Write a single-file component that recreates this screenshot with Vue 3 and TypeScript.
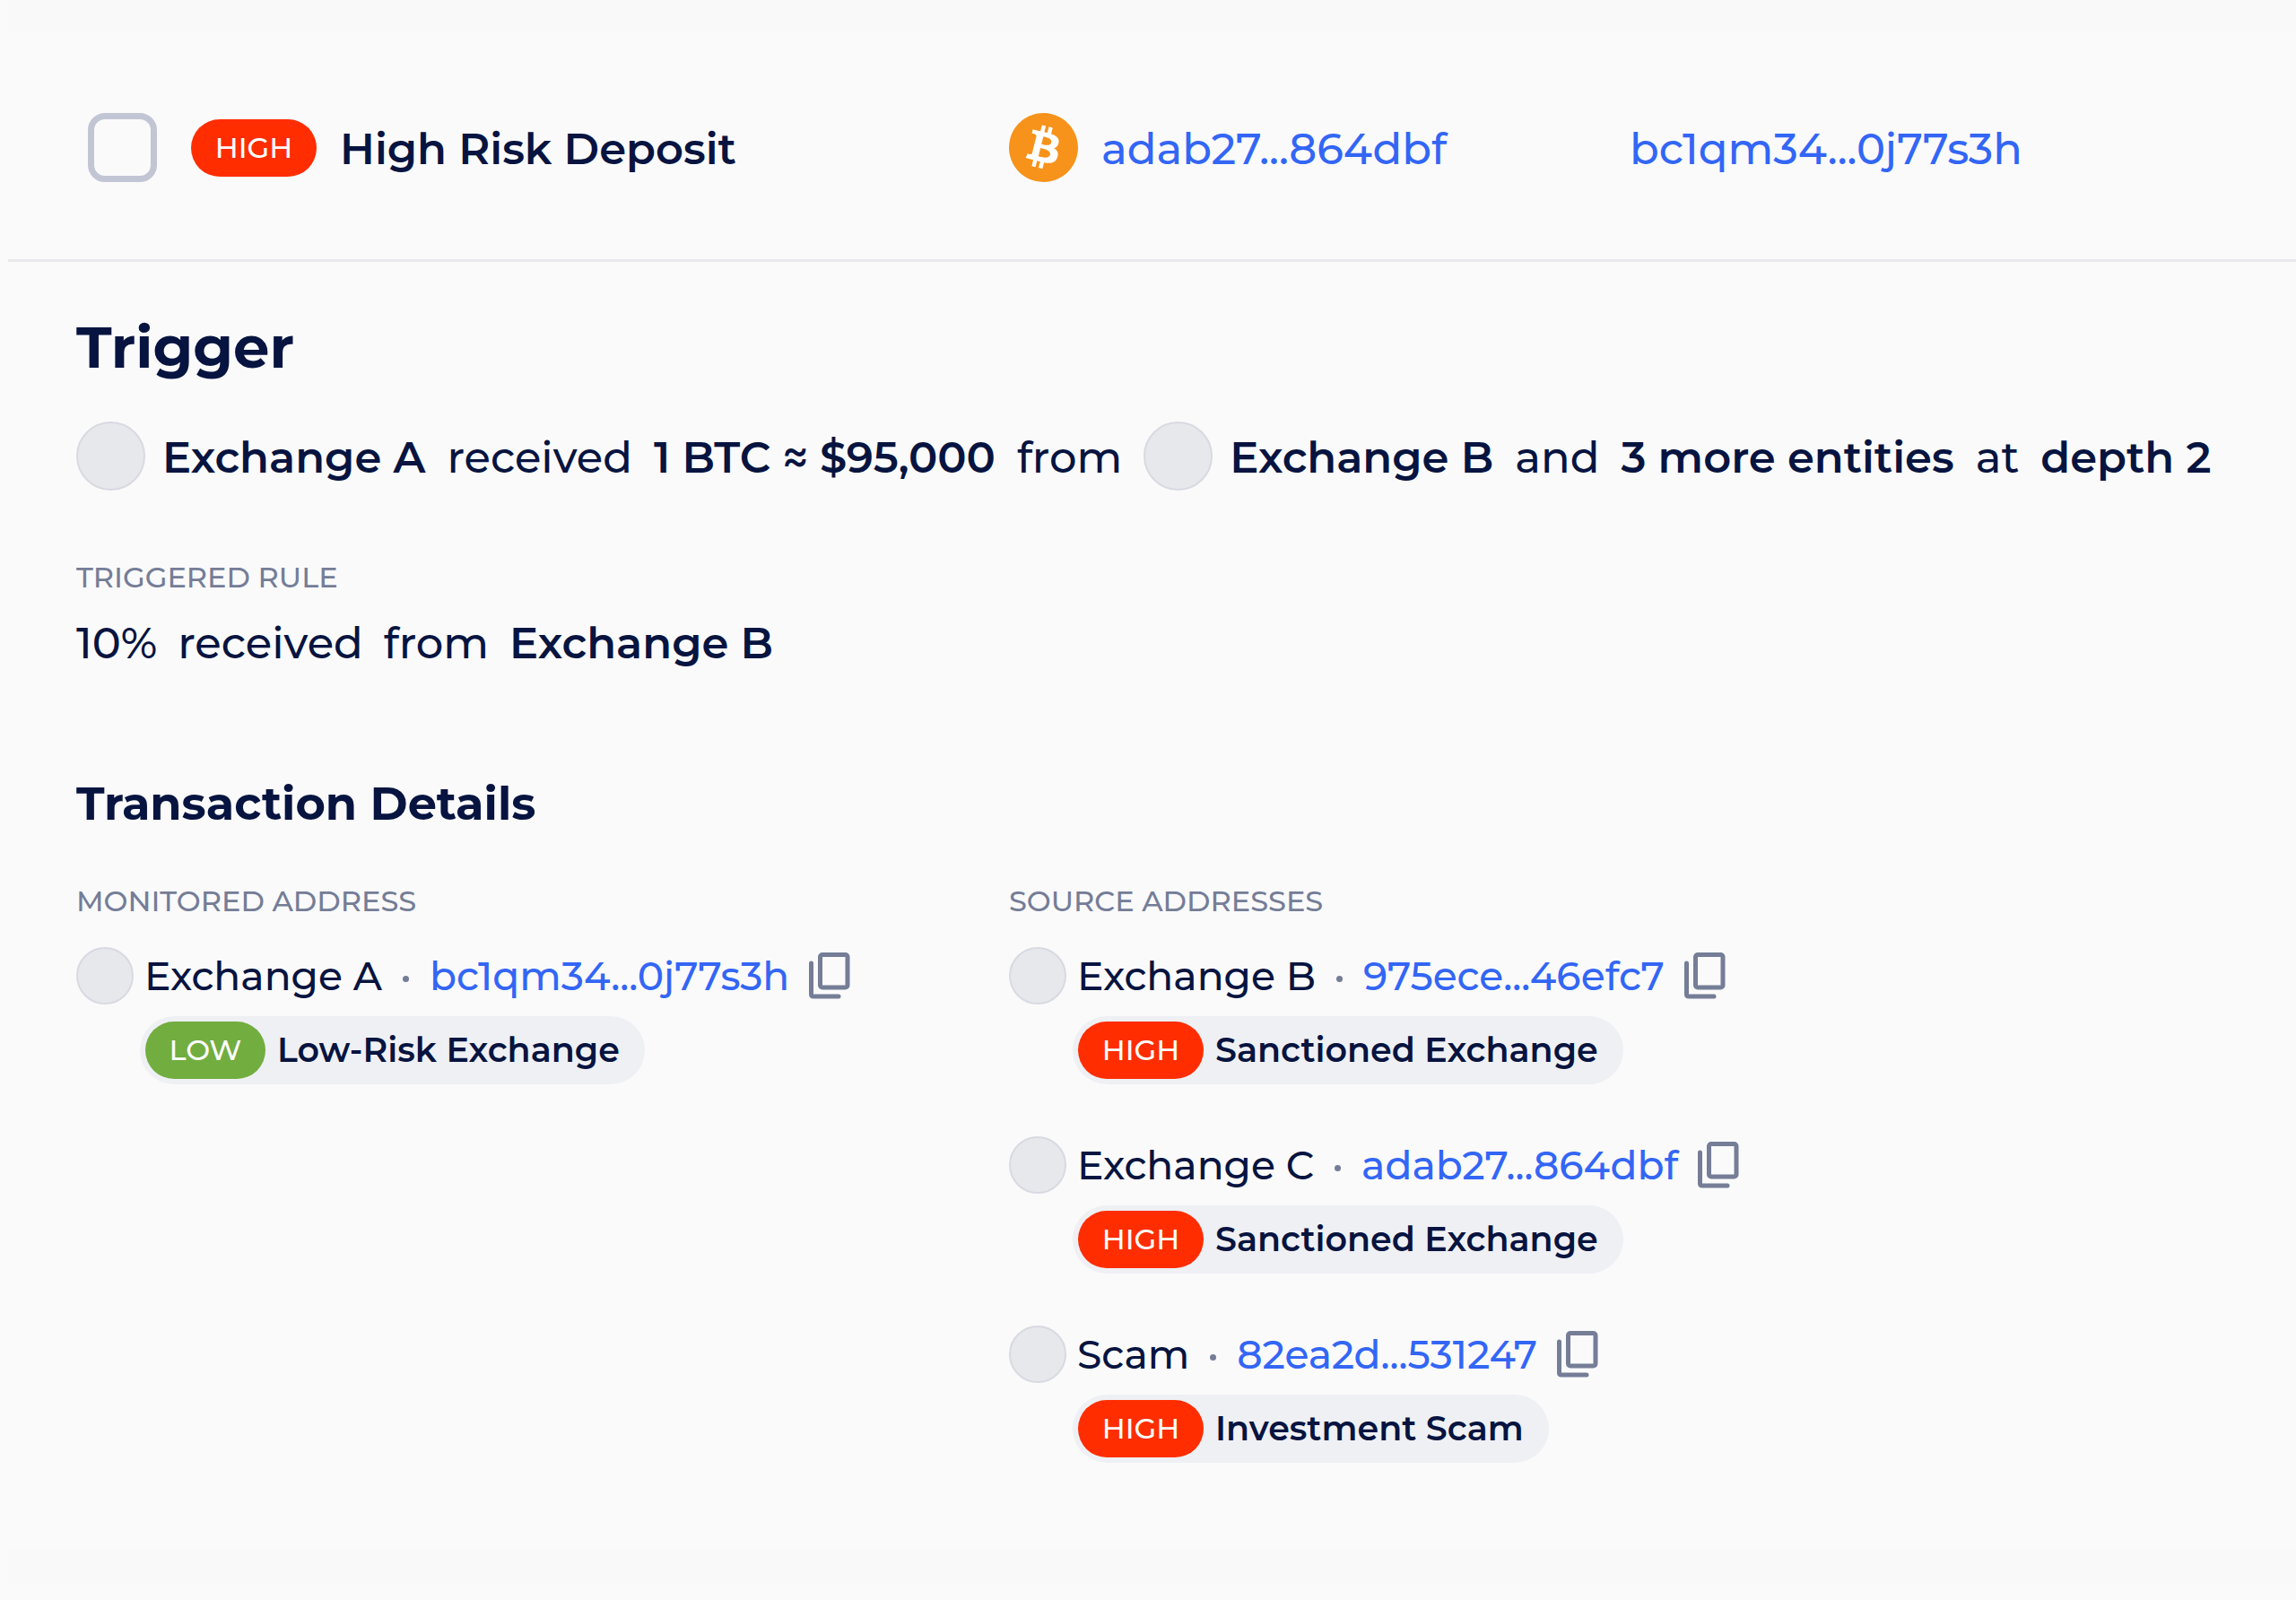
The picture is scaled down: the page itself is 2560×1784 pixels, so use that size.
<script setup lang="ts">
type Level = 'high' | 'low'

interface Entry {
  name: string
  address: string
  level: Level
  category: string
}

interface Column {
  id: string
  title: string
  entries: Entry[]
}

const columns: Column[] = [
  {
    id: 'monitored',
    title: 'MONITORED ADDRESS',
    entries: [
      { name: 'Exchange A', address: 'bc1qm34...0j77s3h', level: 'low', category: 'Low-Risk Exchange' },
    ],
  },
  {
    id: 'source',
    title: 'SOURCE ADDRESSES',
    entries: [
      { name: 'Exchange B', address: '975ece...46efc7', level: 'high', category: 'Sanctioned Exchange' },
      { name: 'Exchange C', address: 'adab27...864dbf', level: 'high', category: 'Sanctioned Exchange' },
      { name: 'Scam', address: '82ea2d...531247', level: 'high', category: 'Investment Scam' },
    ],
  },
]

function copy(address: string): void {
  void navigator.clipboard?.writeText(address)
}
</script>

<template>
  <main class="page">
    <article class="card">
      <header class="summary">
        <div class="alert">
          <input id="select-alert" class="check" type="checkbox" />
          <span class="badge high">HIGH</span>
          <label class="alert-name" for="select-alert">High Risk Deposit</label>
        </div>
        <div class="transaction">
          <svg class="coin" viewBox="0 0 24 24" aria-hidden="true">
            <circle cx="12" cy="12" r="11" fill="#fff" />
            <path
              fill="#f7931a"
              d="M23.638 14.904c-1.602 6.43-8.113 10.34-14.542 8.736C2.67 22.05-1.244 15.525.362 9.105 1.962 2.67 8.475-1.243 14.9.358c6.43 1.605 10.342 8.115 8.738 14.548v-.002zm-6.35-4.613c.24-1.59-.974-2.45-2.64-3.03l.54-2.153-1.315-.33-.525 2.107c-.345-.087-.705-.167-1.064-.25l.526-2.127-1.32-.33-.54 2.165c-.285-.067-.565-.132-.84-.2l-1.815-.45-.35 1.407s.975.225.955.236c.535.136.63.486.615.766l-1.477 5.92c-.075.166-.24.406-.614.314.015.02-.96-.24-.96-.24l-.66 1.51 1.71.426.93.242-.54 2.19 1.32.327.54-2.17c.36.1.705.19 1.05.273l-.51 2.154 1.32.33.545-2.19c2.24.427 3.93.257 4.64-1.774.57-1.637-.03-2.58-1.217-3.196.854-.193 1.5-.76 1.68-1.93h.01zm-3.01 4.22c-.404 1.64-3.157.75-4.05.53l.72-2.9c.896.23 3.757.67 3.33 2.37zm.41-4.24c-.37 1.49-2.662.735-3.405.55l.654-2.64c.744.18 3.137.524 2.75 2.084v.006z"
            />
          </svg>
          <a href="#transaction">adab27...864dbf</a>
        </div>
        <a href="#address">bc1qm34...0j77s3h</a>
      </header>

      <section class="body">
        <h1>Trigger</h1>
        <p class="sentence">
          <span class="entity"><i class="avatar"></i><strong>Exchange A</strong></span>
          <span class="word">received</span>
          <strong>1 BTC ≈ $95,000</strong>
          <span class="word">from</span>
          <span class="entity"><i class="avatar"></i><strong>Exchange B</strong></span>
          <span class="word">and</span>
          <strong>3 more entities</strong>
          <span class="word">at</span>
          <strong>depth 2</strong>
        </p>

        <h3 class="rule-label">TRIGGERED RULE</h3>
        <p class="rule">
          <span class="word">10%</span>
          <span class="word">received</span>
          <span class="word">from</span>
          <strong>Exchange B</strong>
        </p>

        <h2>Transaction Details</h2>
        <div class="details">
          <section v-for="column in columns" :key="column.id">
            <h3>{{ column.title }}</h3>
            <ul>
              <li v-for="entry in column.entries" :key="entry.address">
                <div class="entry">
                  <i class="avatar small"></i>
                  <span>{{ entry.name }}</span>
                  <i class="dot"></i>
                  <a href="#address">{{ entry.address }}</a>
                  <button type="button" aria-label="Copy address" @click="copy(entry.address)">
                    <svg viewBox="0 0 46 52" aria-hidden="true">
                      <rect x="12.5" y="2.5" width="30.5" height="36.5" rx="2.5" />
                      <path d="M2.5 12v34.500q0 2.500 2.500 2.500h28" />
                    </svg>
                  </button>
                </div>
                <div class="pill">
                  <span class="badge" :class="entry.level">{{ entry.level.toUpperCase() }}</span>
                  <span>{{ entry.category }}</span>
                </div>
              </li>
            </ul>
          </section>
        </div>
      </section>
    </article>
  </main>
</template>

<style>
body {
  margin: 0;
  background: #fafafa;
}
</style>

<style scoped>
.page {
  padding: 0 0 17px 9px;
  color: #071440;
  font-family: Montserrat, Inter, sans-serif;
  font-size: 48px;
  font-weight: 500;
  line-height: 60px;
}

.card {
  background:
    linear-gradient(#f9f9f9 37px, transparent 37px),
    linear-gradient(to top, #f9f9f9 37px, #fafafb 37px);
}

h1,
h2,
h3,
p,
ul {
  margin: 0;
  padding: 0;
  white-space: nowrap;
}

ul {
  list-style: none;
}

a {
  color: #3366f5;
  text-decoration: none;
}

strong {
  font-weight: 600;
}

.summary {
  display: grid;
  grid-template-columns: 1040fr 692fr 743fr;
  align-items: center;
  padding: 126px 0 86px 76px;
  border-bottom: 3px solid #e9e9ec;
  white-space: nowrap;
}

.alert,
.transaction,
.sentence,
.rule,
.entity,
.entry,
.pill {
  display: flex;
  align-items: center;
}

.summary a,
.alert-name,
.word,
strong {
  padding-top: 3px;
}

.alert {
  padding-left: 13px;
}

.check {
  appearance: none;
  flex: none;
  width: 77px;
  height: 77px;
  margin: 0 38px 0 0;
  border: 7px solid #c2c5d3;
  border-radius: 19px;
}

.badge {
  display: inline-flex;
  align-items: center;
  justify-content: center;
  flex: none;
  box-sizing: border-box;
  width: 140px;
  height: 64px;
  border-radius: 32px;
  color: #fff;
  font-size: 32px;
  font-weight: 500;
  line-height: 40px;
}

.high {
  background: #ff2d00;
}

.low {
  width: 134px;
  background: #72ad40;
}

.alert-name {
  margin-left: 26px;
  font-weight: 600;
}

.transaction {
  gap: 26px;
}

.coin {
  flex: none;
  width: 77px;
  height: 77px;
}

.body {
  padding: 55px 0 134px 76px;
}

h1 {
  font-size: 64px;
  font-weight: 700;
  line-height: 80px;
}

.sentence {
  margin-top: 43px;
  gap: 24px;
}

.entity {
  gap: 19px;
}

.avatar {
  box-sizing: border-box;
  flex: none;
  width: 77px;
  height: 77px;
  border: 2px solid #d9dae1;
  border-radius: 50%;
  background: #e6e8ec;
}

.small {
  width: 64px;
  height: 64px;
  margin-right: 12px;
}

h3 {
  color: #757d97;
  font-size: 32px;
  font-weight: 500;
  line-height: 40px;
}

.rule-label {
  margin-top: 77px;
}

.rule {
  margin-top: 20px;
  gap: 23px;
}

h2 {
  margin-top: 119px;
  font-size: 51px;
  font-weight: 700;
  line-height: 60px;
}

.details {
  display: grid;
  grid-template-columns: 1040fr 1435fr;
  margin-top: 59px;
}

ul {
  display: grid;
  gap: 58px;
  margin-top: 31px;
}

.entry {
  height: 64px;
  font-size: 44px;
}

.dot {
  flex: none;
  width: 7px;
  height: 7px;
  margin: 6px 23px 0;
  border-radius: 50%;
  background: #757d97;
}

button {
  flex: none;
  width: 46px;
  height: 52px;
  margin-left: 22px;
  padding: 0;
  border: 0;
  background: none;
}

button svg {
  display: block;
  width: 46px;
  height: 52px;
  fill: none;
  stroke: #757d97;
  stroke-width: 5;
  stroke-linecap: round;
}

.pill {
  width: max-content;
  gap: 13px;
  box-sizing: border-box;
  height: 76px;
  margin: 13px 0 0 71px;
  padding: 0 28px 0 6px;
  border-radius: 38px;
  background: #eff0f4;
  font-size: 38px;
  font-weight: 600;
}
</style>
